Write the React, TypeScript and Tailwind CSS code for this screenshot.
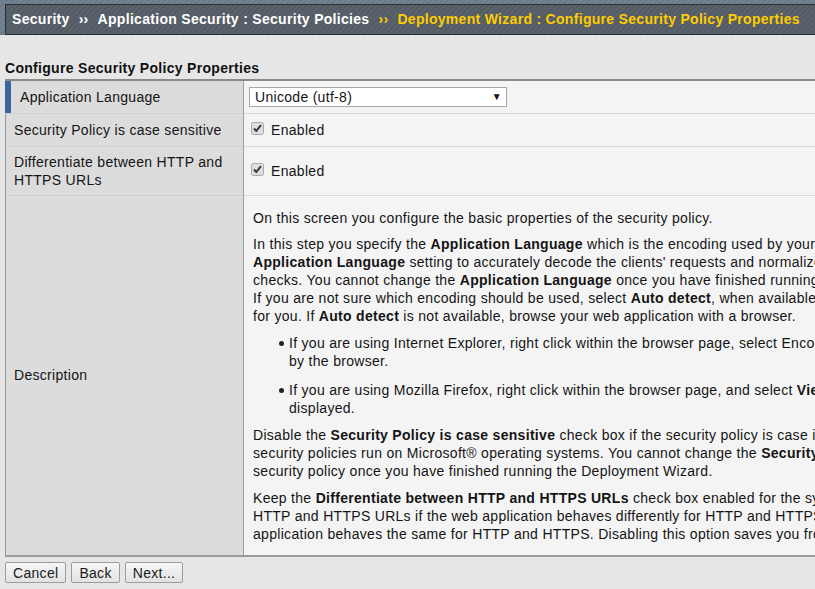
import React from 'react';

// Greyed checkbox with a dark tick, as the old browser skin drew it
function CheckBox(): JSX.Element {
  return (
    <svg width="13" height="13" viewBox="0 0 13 13" className="shrink-0">
      <rect x="0.5" y="0.5" width="12" height="12" rx="2" fill="#dedede" stroke="#a8a8a8" />
      <path d="M3 6.5 L5.3 9 L10 3.2" fill="none" stroke="#3c3c3c" strokeWidth="2" />
    </svg>
  );
}

function Line({ children }: { children: React.ReactNode }): JSX.Element {
  return <div className="whitespace-nowrap h-[18px] leading-[18px]">{children}</div>;
}

function B({ children }: { children: React.ReactNode }): JSX.Element {
  return <b className="font-bold">{children}</b>;
}

function Bullet({ lines }: { lines: React.ReactNode[] }): JSX.Element {
  return (
    <div className="flex">
      <div className="w-[36px] shrink-0 flex justify-end pr-[5px] pt-[7px]">
        <div className="w-[5px] h-[5px] rounded-full bg-[#222]" />
      </div>
      <div>
        {lines.map((l, i) => (
          <Line key={i}>{l}</Line>
        ))}
      </div>
    </div>
  );
}

export default function App(): JSX.Element {
  return (
    <div className="w-[815px] h-[589px] overflow-hidden bg-[#e6e6e6] text-[#141414] font-['Liberation_Sans',Arial,sans-serif] text-[14px] tracking-[0.3px]">
      {/* breadcrumb bar */}
      <div className="bg-[#6e7e8e] bg-[repeating-linear-gradient(135deg,#6b7b8b_0px,#6b7b8b_2px,#738393_2px,#738393_4px)] pt-[4px] pl-[5px]">
        <div className="h-[31px] border border-[#2e2e2e] border-r-0 bg-[#555d67] bg-[repeating-linear-gradient(135deg,#535b65_0px,#535b65_2px,#5a626c_2px,#5a626c_4px)] flex items-center pl-[6px] font-bold text-[14px] whitespace-nowrap">
          <span className="text-white">Security</span>
          <span className="text-white mx-[9px]">››</span>
          <span className="text-white">Application Security : Security Policies</span>
          <span className="text-[#ffcc00] mx-[9px]">››</span>
          <span className="text-[#ffcc00]">Deployment Wizard : Configure Security Policy Properties</span>
        </div>
      </div>

      {/* section title */}
      <div className="pt-[25px] pl-[5px] h-[44px] leading-[16px] font-bold text-[14px] text-[#111]">
        Configure Security Policy Properties
      </div>

      {/* properties table */}
      <div className="ml-[5px] w-[1000px] border-t-2 border-t-[#8a8a8a] border-b-2 border-b-[#9a9a9a] border-l border-l-[#9a9a9a]">
        <div className="grid grid-cols-[238px_1fr]">
          {/* Application Language */}
          <div className="h-[33px] bg-[#dcdcdc] border-r border-r-[#a0a0a0] border-b border-b-[#cfcfcf] flex items-center relative -ml-px">
            <div className="w-[6px] self-stretch bg-[#3a6699]" />
            <span className="pl-[9px]">Application Language</span>
          </div>
          <div className="h-[33px] bg-[#f4f4f4] border-b border-b-[#d8d8d8] flex items-center pl-[5px]">
            <div className="w-[258px] h-[20px] bg-white border border-[#a9a9a9] flex items-center justify-between pl-[5px] pr-[4px]">
              <span>Unicode (utf-8)</span>
              <span className="text-[10px] leading-none">▼</span>
            </div>
          </div>

          {/* case sensitive */}
          <div className="h-[33px] bg-[#dcdcdc] border-r border-r-[#a0a0a0] border-b border-b-[#cfcfcf] flex items-center pl-[8px]">
            Security Policy is case sensitive
          </div>
          <div className="h-[33px] bg-[#f4f4f4] border-b border-b-[#d8d8d8] flex items-center pl-[7px] gap-[7px]">
            <div className="-mt-[3px]"><CheckBox /></div>
            <span>Enabled</span>
          </div>

          {/* http / https */}
          <div className="h-[49px] bg-[#dcdcdc] border-r border-r-[#a0a0a0] border-b border-b-[#cfcfcf] flex items-center pl-[8px] leading-[18px]">
            <div>
              Differentiate between HTTP and
              <br />
              HTTPS URLs
            </div>
          </div>
          <div className="h-[49px] bg-[#f4f4f4] border-b border-b-[#d8d8d8] flex items-center pl-[7px] gap-[7px]">
            <div className="-mt-[3px]"><CheckBox /></div>
            <span>Enabled</span>
          </div>

          {/* description */}
          <div className="bg-[#dcdcdc] border-r border-r-[#a0a0a0] flex items-center pl-[8px]">Description</div>
          <div className="bg-[#f4f4f4] pl-[9px] pt-[13px] pb-[12px] flex flex-col">
            <Line>On this screen you configure the basic properties of the security policy.</Line>

            <div className="mt-[8px]">
              <Line>
                In this step you specify the <B>Application Language</B> which is the encoding used by your web application. The system uses the
              </Line>
              <Line>
                <B>Application Language</B> setting to accurately decode the clients' requests and normalize them before performing security
              </Line>
              <Line>
                checks. You cannot change the <B>Application Language</B> once you have finished running the Deployment Wizard.
              </Line>
              <Line>
                If you are not sure which encoding should be used, select <B>Auto detect</B>, when available, and the system detects the encoding
              </Line>
              <Line>
                for you. If <B>Auto detect</B> is not available, browse your web application with a browser.
              </Line>
            </div>

            <div className="mt-[9px]">
              <Bullet
                lines={[
                  'If you are using Internet Explorer, right click within the browser page, select Encoding, and note the encoding that is selected',
                  'by the browser.',
                ]}
              />
            </div>
            <div className="mt-[11px]">
              <Bullet
                lines={[
                  <>
                    If you are using Mozilla Firefox, right click within the browser page, and select <B>View Page Info</B>. The encoding is
                  </>,
                  'displayed.',
                ]}
              />
            </div>

            <div className="mt-[9px]">
              <Line>
                Disable the <B>Security Policy is case sensitive</B> check box if the security policy is case insensitive. This is typical for
              </Line>
              <Line>
                security policies run on Microsoft® operating systems. You cannot change the <B>Security Policy is case sensitive</B> setting for the
              </Line>
              <Line>security policy once you have finished running the Deployment Wizard.</Line>
            </div>

            <div className="mt-[9px]">
              <Line>
                Keep the <B>Differentiate between HTTP and HTTPS URLs</B> check box enabled for the system to differentiate between
              </Line>
              <Line>
                HTTP and HTTPS URLs if the web application behaves differently for HTTP and HTTPS. Disable it if the web
              </Line>
              <Line>
                application behaves the same for HTTP and HTTPS. Disabling this option saves you from configuring duplicate entities.
              </Line>
            </div>
          </div>
        </div>
      </div>

      {/* wizard buttons */}
      <div className="flex gap-[5px] pl-[5px] pt-[5px]">
        {['Cancel', 'Back', 'Next...'].map((t) => (
          <button
            key={t}
            className="h-[21px] px-[7px] border border-[#9c9c9c] rounded-[2px] bg-[linear-gradient(#f6f6f6,#e2e2e2)] text-[14px] leading-none text-[#1a1a1a] tracking-[0.3px]"
          >
            {t}
          </button>
        ))}
      </div>
    </div>
  );
}
